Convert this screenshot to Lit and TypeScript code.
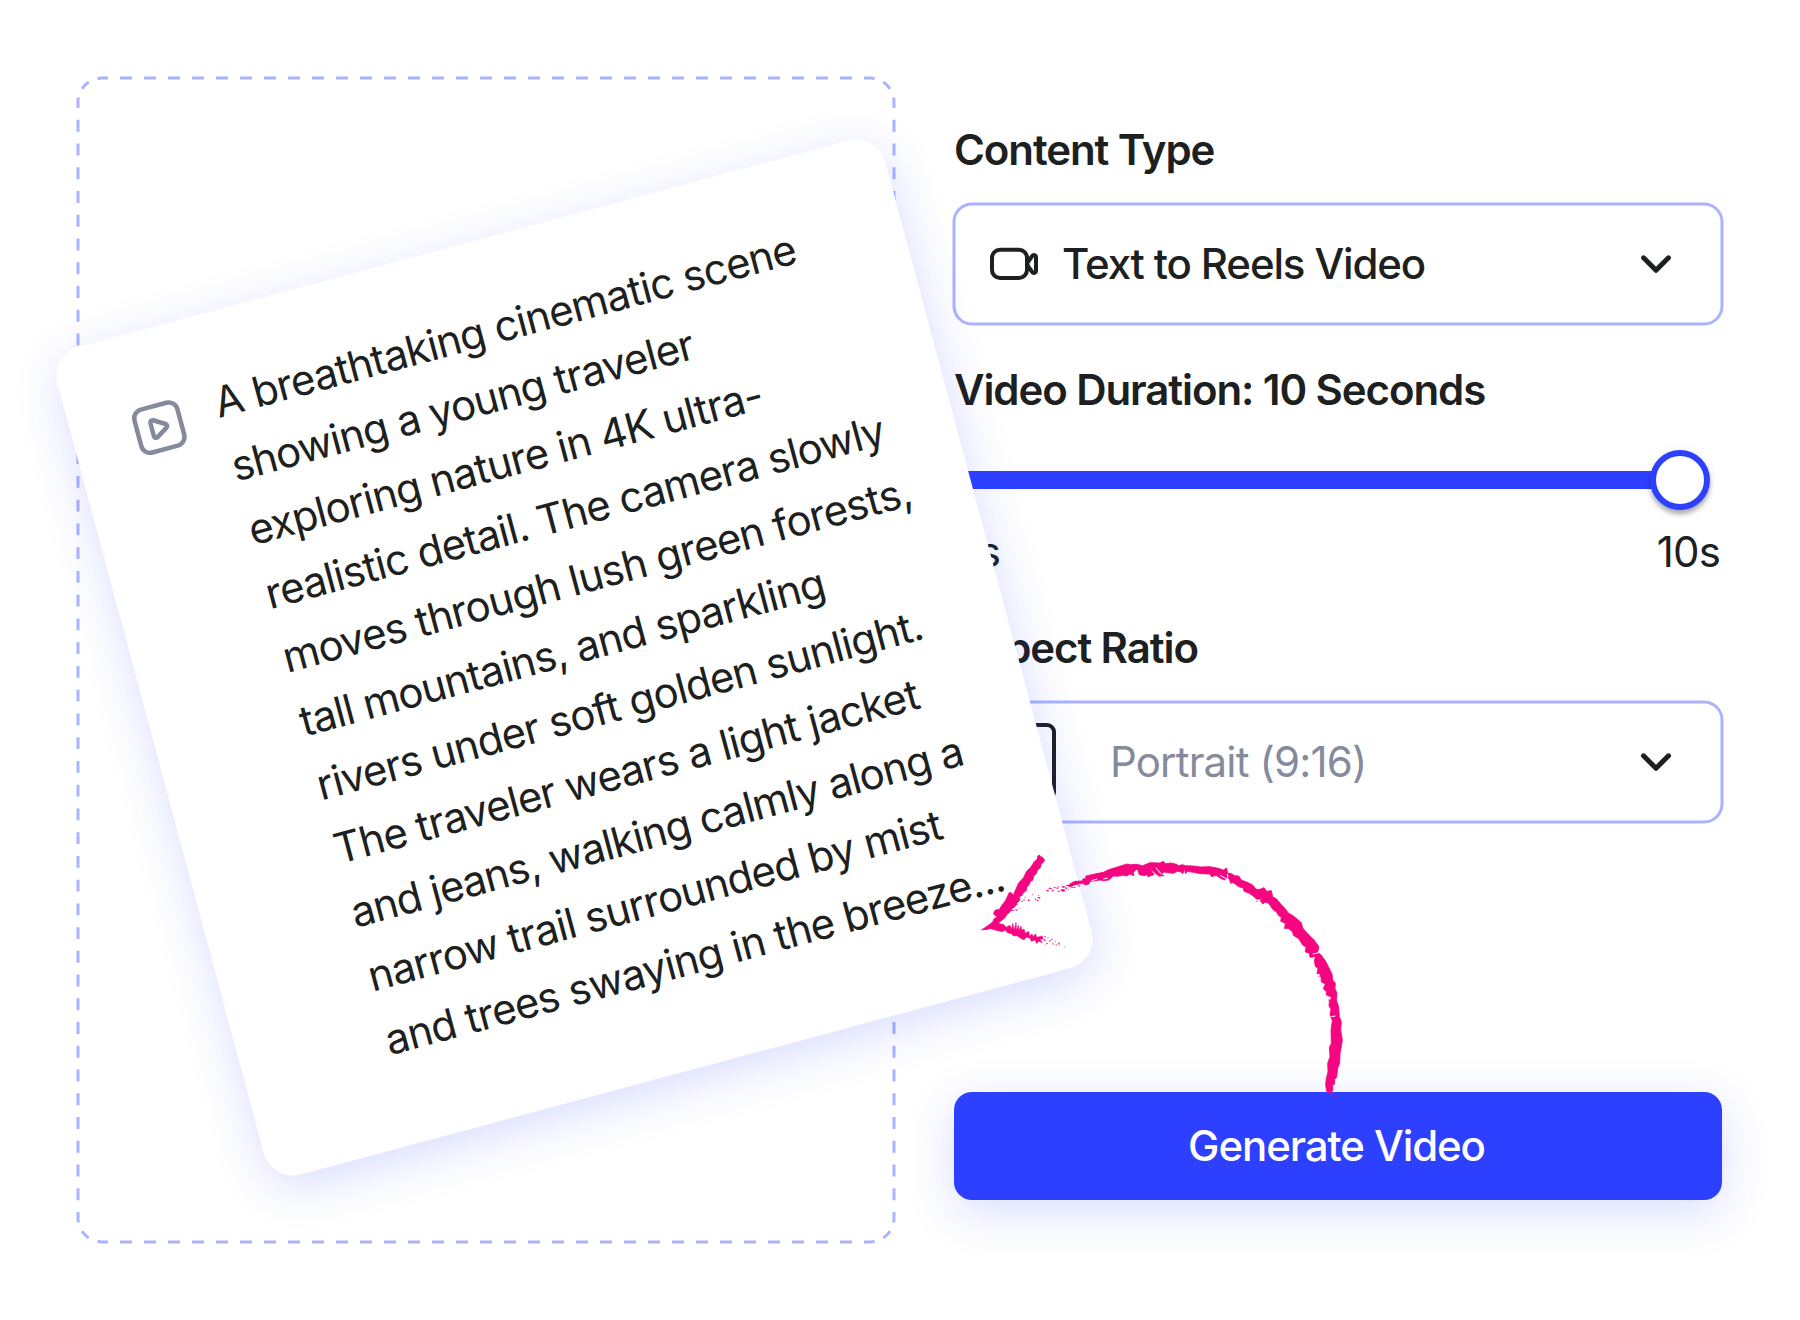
import { LitElement, html, css, svg } from 'lit';
import { customElement, property } from 'lit/decorators.js';

interface PromptLine {
  text: string;
  tracking: number;
}

const PROMPT_LINES: PromptLine[] = [
  { text: 'A breathtaking cinematic scene', tracking: -0.84 },
  { text: 'showing a young traveler', tracking: -0.94 },
  { text: 'exploring nature in 4K ultra-', tracking: -0.92 },
  { text: 'realistic detail. The camera slowly', tracking: -0.94 },
  { text: 'moves through lush green forests,', tracking: -0.87 },
  { text: 'tall mountains, and sparkling', tracking: -0.92 },
  { text: 'rivers under soft golden sunlight.', tracking: -0.87 },
  { text: 'The traveler wears a light jacket', tracking: -0.87 },
  { text: 'and jeans, walking calmly along a', tracking: -1.01 },
  { text: 'narrow trail surrounded by mist', tracking: -0.91 },
  { text: 'and trees swaying in the breeze...', tracking: -0.84 },
];

/**
 * Select-like field with a leading icon slot and a chevron.
 *
 * @element select-field
 * @prop {string} label - Text shown in the field
 * @prop {boolean} muted - Grey, regular weight text
 */
@customElement('select-field')
export class SelectField extends LitElement {
  @property({ type: String }) label = '';
  @property({ type: Boolean, reflect: true }) muted = false;

  static styles = css`
    :host {
      display: grid;
      height: 120px;
    }

    .outline,
    .content {
      grid-area: 1 / 1;
    }

    .outline {
      width: 768px;
      height: 120px;
      overflow: visible;
    }

    .content {
      display: flex;
      align-items: center;
      gap: 18px;
      padding: 0 36px 0 30px;
    }

    .text {
      flex: 1;
      font-weight: 500;
      letter-spacing: -1.14px;
      white-space: nowrap;
    }

    :host([muted]) .content {
      gap: 30px;
    }

    :host([muted]) .text {
      font-weight: 400;
      letter-spacing: -0.84px;
      color: #858a9c;
    }

    .chevron {
      display: block;
      width: 60px;
      height: 60px;
    }
  `;

  render() {
    return html`
      <svg class="outline" viewBox="0 0 768 120">
        <rect width="768" height="120" rx="18" fill="none" stroke="#abb3ff" stroke-width="3" />
      </svg>
      <div class="content">
        <slot></slot>
        <span class="text">${this.label}</span>
        <svg class="chevron" viewBox="0 0 60 60">
          <path
            d="M17.5 23.8 30 36.3 42.5 23.8"
            fill="none"
            stroke="#1d1f20"
            stroke-width="5"
            stroke-linecap="round"
            stroke-linejoin="round"
          />
        </svg>
      </div>
    `;
  }
}

/**
 * Slider with its end labels.
 *
 * @element duration-slider
 */
@customElement('duration-slider')
export class DurationSlider extends LitElement {
  @property({ type: String }) min = '5s';
  @property({ type: String }) max = '10s';

  static styles = css`
    :host {
      display: block;
    }

    .rail {
      display: flex;
      align-items: center;
      height: 60px;
    }

    .fill {
      width: 700px;
      height: 18px;
      margin-right: -4px;
      border-radius: 9px 0 0 9px;
      background: #2e40ff;
    }

    .thumb {
      box-sizing: border-box;
      width: 60px;
      height: 60px;
      border: 6px solid #2e40ff;
      border-radius: 50%;
      background: #fff;
      box-shadow: 0 4px 5px rgba(0, 0, 0, 0.32), 0 0 12px rgba(46, 64, 255, 0.06);
    }

    .range {
      display: flex;
      justify-content: space-between;
      margin-top: 12px;
      padding-right: 2px;
      letter-spacing: -0.84px;
    }
  `;

  render() {
    return html`
      <div class="rail">
        <div class="fill"></div>
        <div class="thumb"></div>
      </div>
      <div class="range">
        <span>${this.min}</span>
        <span>${this.max}</span>
      </div>
    `;
  }
}

/**
 * Tilted card holding the prompt text.
 *
 * @element prompt-card
 */
@customElement('prompt-card')
export class PromptCard extends LitElement {
  @property({ attribute: false }) lines: PromptLine[] = [];

  static styles = css`
    :host {
      box-sizing: border-box;
      display: flex;
      align-items: flex-start;
      gap: 30px;
      width: 857px;
      height: 857px;
      padding: 56.5px 0 0 57px;
      border-radius: 30px;
      background: #fff;
      box-shadow: 0 12px 48px rgba(46, 64, 255, 0.18);
      transform: rotate(-15deg);
    }

    .icon {
      width: 60px;
      height: 60px;
      margin-top: 12px;
    }

    .line {
      line-height: 66px;
      white-space: nowrap;
    }
  `;

  render() {
    return html`
      <svg class="icon" viewBox="0 0 60 60" fill="none" stroke="#858a9c" stroke-width="4.5" stroke-linejoin="round">
        <rect x="7.8" y="7.8" width="44.4" height="44.4" rx="9" />
        <path d="M22.5 23.2v13.6c0 1.8 1.9 2.8 3.4 1.9l11-6.8c1.5-.9 1.5-2.9 0-3.8l-11-6.8c-1.5-.9-3.4.1-3.4 1.9z" />
      </svg>
      <div>
        ${this.lines.map(
          (line) => html`<div class="line" style=${`letter-spacing: ${line.tracking}px`}>${line.text}</div>`
        )}
      </div>
    `;
  }
}

/**
 * Hand-drawn brush arrow.
 *
 * @element brush-arrow
 */
@customElement('brush-arrow')
export class BrushArrow extends LitElement {
  static styles = css`
    :host {
      display: block;
      width: 400px;
      height: 280px;
    }

    svg {
      display: block;
      width: 100%;
      height: 100%;
    }
  `;

  // Small flecks of paint, as x, y, width, height
  private specks = [
    [150, 240, 14, 3], [164, 238, 10, 4], [176, 235, 5, 3], [166, 222, 8, 3], [182, 212, 7, 4],
    [190, 207, 4, 7], [202, 208, 8, 6], [193, 200, 5, 3], [224, 205, 5, 6], [231, 201, 11, 5],
    [234, 194, 4, 4], [228, 210, 9, 3], [258, 180, 9, 5], [262, 173, 16, 4], [276, 178, 5, 8],
    [288, 172, 8, 5], [290, 182, 12, 3], [300, 177, 16, 8], [304, 168, 12, 6], [314, 172, 8, 5],
    [322, 176, 6, 3], [294, 168, 4, 3], [340, 170, 7, 5], [352, 166, 9, 4], [216, 192, 3, 3],
    [316, 164, 14, 5], [326, 160, 12, 6], [332, 170, 8, 4], [306, 180, 10, 4], [280, 171, 8, 4],
    [252, 318, 6, 4], [250, 328, 8, 5], [258, 338, 6, 5], [262, 322, 4, 3], [266, 331, 7, 4],
    [274, 325, 3, 8], [276, 340, 6, 4], [284, 334, 4, 3], [286, 343, 5, 4], [294, 337, 5, 9],
    [312, 350, 3, 3], [254, 343, 3, 3], [1122, 798, 4, 4], [972, 294, 5, 4], [904, 220, 6, 3],
    [888, 212, 5, 4], [1104, 508, 4, 4], [1074, 437, 4, 4],
  ];

  render() {
    return html`
      <svg viewBox="0 0 1200 840" fill="#f5057f">
        <path
          d="M238 75 243 80 248 82 254 91 249 98 244 103 241 114 233 120 229 131 221 139 219 150 211 155 208 164 200 172
          199 182 190 188 187 196 178 200 180 210 171 220 165 230 156 236 150 246 142 252 134 264 124 272 108 286 84 297
          64 300 82 288 98 276 102 266 112 260 104 256 100 250 106 240 118 238 124 228 136 212 148 187 156 190 160 195
          168 176 176 158 190 144 200 123 212 112 222 96 232 87 232 79Z"
          stroke="#f5057f"
          stroke-width="2"
        />
        <path
          d="M72 299 96 289 116 280 132 284 138 292 150 286 155 298 158 280 163 300 168 277 170 302 175 285 178 304 182 288
          186 300 192 297 196 310 206 304 209 318 216 312 220 320 226 311 231 322 246 318 250 327 240 328 247 338 236 334
          230 341 226 330 214 334 210 325 200 322 192 329 184 326 178 322 170 317 160 318 154 311 142 308 136 300 126 305
          108 301 92 296Z"
          stroke="#f5057f"
          stroke-width="1.5"
        />
        <path
          d="M325 168 336 158 345 154 366 153 370 146 376 147 378 138 400 133 430 127 446 119 475 110 500 102 512 104 530 103
          548 107 570 98 600 99 610 94 616 101 632 99 650 103 655 107 668 104 676 107 700 108 722 111 750 110 775 115
          790 120 800 114 803 130 812 130 824 137 836 138 844 150 860 156 878 165 888 178 900 178 912 173 920 184 934 182
          938 200 950 207 962 222 976 236 984 248 1000 258 1012 268 1024 278 1028 294 1038 306 1050 318 1062 330 1077 350
          1073 366 1084 376 1096 392 1106 412 1116 432 1118 450 1126 460 1125 476 1131 490 1129 510 1136 530 1138 560
          1144 575 1142 600 1147 630 1143 655 1140 670 1139 700 1133 715 1130 742 1124 748 1124 762 1118 766 1118 782
          1112 790 1100 784 1097 765 1099 745 1104 725 1103 700 1110 680 1108 653 1114 640 1113 600 1117 572 1110 553
          1113 538 1107 528 1108 514 1115 502 1098 494 1100 486 1090 476 1096 462 1084 456 1083 442 1078 430 1071 432
          1074 414 1066 410 1063 390 1068 380 1050 382 1048 370 1036 366 1038 352 1028 345 1016 326 1000 316 998 306
          986 296 974 294 976 280 962 274 964 262 955 256 950 246 940 240 926 220 914 216 910 222 900 212 908 206
          890 208 882 200 868 190 852 184 850 174 836 170 820 158 812 160 808 148 802 142 794 150 780 144 768 136
          754 140 750 132 722 131 700 127 683 124 676 131 674 116 668 132 664 126 652 124 640 130 624 128 612 126
          606 131 590 113 583 110 600 132 612 137 596 138 582 126 568 112 582 134 564 140 560 134 552 137 538 134
          534 122 530 117 520 128 522 137 510 132 500 138 490 136 470 139 460 138 446 150 430 152 420 150 400 153
          388 155 388 161 376 165 368 160 345 164 332 170Z"
          stroke="#f5057f"
          stroke-width="2.5"
        />
        <path
          d="M780 136 802 148M1058 372 1078 368M802 132 804 144M1114 560 1126 558M394 152 412 147M430 147 444 144"
          fill="none"
          stroke="#fff"
          stroke-width="3"
        />
        ${this.specks.map(
          ([x, y, w, h]) => svg`<path d="M${x} ${y + h / 2}L${x + w * 0.4} ${y}L${x + w} ${y + h * 0.3}L${x + w * 0.7} ${y + h}Z" />`
        )}
      </svg>
    `;
  }
}

@customElement('app-root')
export class AppRoot extends LitElement {
  static styles = css`
    :host {
      box-sizing: border-box;
      position: relative;
      display: grid;
      grid-template-columns: 816px 768px;
      column-gap: 60px;
      width: 1800px;
      height: 1320px;
      padding: 78px;
      overflow: hidden;
      background: #fff;
      color: #1d1f20;
      font-family: Inter, 'Liberation Sans', sans-serif;
      font-size: 42px;
      line-height: 60px;
    }

    .dropzone {
      width: 816px;
      height: 1164px;
      overflow: visible;
    }

    .panel {
      display: flex;
      flex-direction: column;
      padding: 42px 0;
    }

    .label {
      font-weight: 600;
      letter-spacing: -1.09px;
      white-space: nowrap;
    }

    select-field {
      margin: 24px 0 36px;
    }

    duration-slider {
      margin: 30px 0 36px;
    }

    .icon {
      display: block;
      width: 60px;
      height: 60px;
    }

    .icon--portrait {
      width: 96px;
      height: 96px;
    }

    .generate {
      height: 108px;
      margin-top: auto;
      padding: 0 3px 0 0;
      border: 0;
      border-radius: 18px;
      background: #2e40ff;
      box-shadow: 0 12px 48px rgba(46, 64, 255, 0.18);
      color: #fff;
      font: inherit;
      font-weight: 500;
      letter-spacing: -1.09px;
    }

    /* The card and the arrow lie over both columns */
    .card {
      position: absolute;
      left: 146px;
      top: 228.5px;
    }

    .arrow {
      position: absolute;
      left: 960px;
      top: 830px;
    }
  `;

  private renderDropzone() {
    // Every side and corner starts and ends with half a dash
    return html`
      <svg
        class="dropzone"
        viewBox="0 0 816 1164"
        fill="none"
        stroke="#abb3ff"
        stroke-width="3"
        stroke-dasharray="12"
        stroke-dashoffset="6"
      >
        <path pathLength="768" d="M24 0H792" />
        <path pathLength="768" d="M24 1164H792" />
        <path pathLength="1128" d="M0 24V1140" />
        <path pathLength="1128" d="M816 24V1140" />
        <path pathLength="48" d="M0 24A24 24 0 0 1 24 0" />
        <path pathLength="48" d="M792 0A24 24 0 0 1 816 24" />
        <path pathLength="48" d="M816 1140A24 24 0 0 1 792 1164" />
        <path pathLength="48" d="M24 1164A24 24 0 0 1 0 1140" />
      </svg>
    `;
  }

  render() {
    return html`
      ${this.renderDropzone()}
      <div class="panel">
        <div class="label">Content Type</div>
        <select-field label="Text to Reels Video">
          <svg class="icon" viewBox="0 0 60 60" fill="none" stroke="#1d1f20" stroke-width="4" stroke-linejoin="round">
            <rect x="8" y="15.7" width="35" height="28.3" rx="8" />
            <path d="M43.5 28.5 48.2 22c1.2-1.6 3.8-.8 3.8 1.2v13.6c0 2-2.6 2.8-3.8 1.200L43.500 31.500z" />
          </svg>
        </select-field>
        <div class="label">Video Duration: 10 Seconds</div>
        <duration-slider></duration-slider>
        <div class="label">Aspect Ratio</div>
        <select-field label="Portrait (9:16)" muted>
          <svg class="icon icon--portrait" viewBox="0 0 96 96" fill="none" stroke="#1d1f20" stroke-width="4">
            <rect x="30" y="11" width="40" height="74" rx="7" />
          </svg>
        </select-field>
        <button class="generate">Generate Video</button>
      </div>
      <prompt-card class="card" .lines=${PROMPT_LINES}></prompt-card>
      <brush-arrow class="arrow"></brush-arrow>
    `;
  }
}

declare global {
  interface HTMLElementTagNameMap {
    'app-root': AppRoot;
    'select-field': SelectField;
    'duration-slider': DurationSlider;
    'prompt-card': PromptCard;
    'brush-arrow': BrushArrow;
  }
}
